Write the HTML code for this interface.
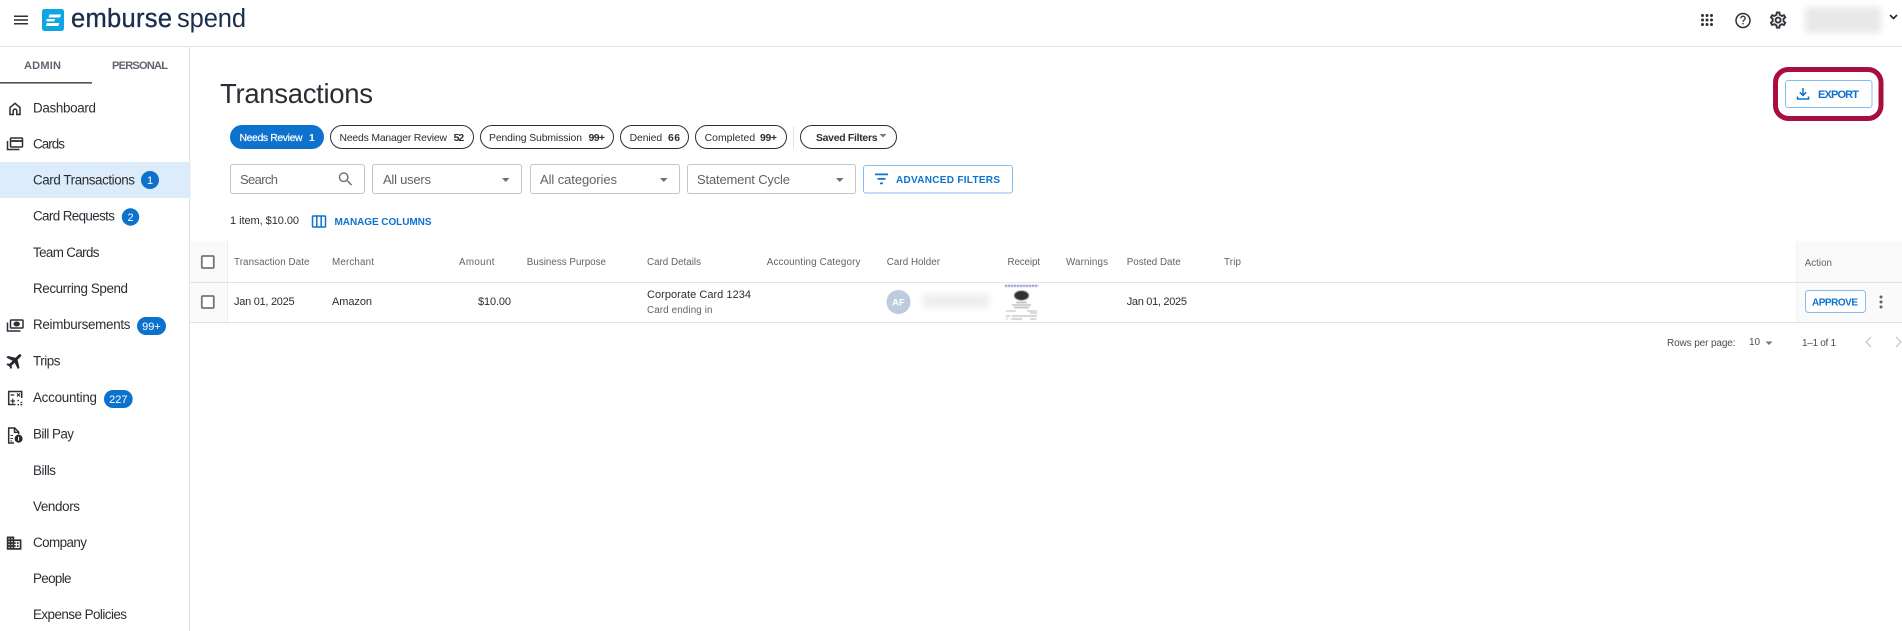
<!DOCTYPE html>
<html lang="en">
<head>
<meta charset="utf-8">
<title>Transactions - emburse spend</title>
<style>
html,body{margin:0;padding:0;background:#fff;width:1902px;height:631px;overflow:hidden}
svg{display:block}
text{font-family:"Liberation Sans",sans-serif;fill:#2a2e34}
.nav{font-size:13.4px}
.tab{font-size:11px;font-weight:700;fill:#5f6570}
.pill{font-size:10.4px}
.b{font-weight:700}
.inp{font-size:13px;fill:#5f6368}
.hd{font-size:9.8px;fill:#5f6368}
.cell{font-size:11px}
.blue{font-size:10px;font-weight:700;fill:#0d72ce}
.badge{font-size:11px;fill:#fff;text-anchor:middle}
.pg{font-size:10px;fill:#4a4e54}
</style>
</head>
<body>
<svg width="1902" height="631" viewBox="0 0 1902 631" xmlns="http://www.w3.org/2000/svg">
<defs>
<filter id="bl" x="-20%" y="-40%" width="140%" height="180%"><feGaussianBlur stdDeviation="3.500"/></filter>
<filter id="bs" x="-10%" y="-10%" width="120%" height="120%"><feGaussianBlur stdDeviation="0.450"/></filter>
</defs>
<rect width="1902" height="631" fill="#fff"/>

<!-- header -->
<rect x="0" y="46" width="1902" height="1" fill="#e3e3e3"/>
<path d="M14 15.500h14v1.500H14zM14 19.300h14v1.500H14zM14 23h14v1.500H14z" fill="#2b2f36"/>
<rect x="42" y="9" width="22" height="22" rx="2.500" fill="#0ea5e4"/>
<path d="M49.500 14.500h11.500l-.9 3H48.500zM46.800 19h8.200l-.8 2.400h-8zM46.800 23h12.400l-.8 3H46z" fill="#fff"/>
<text x="71" y="27" font-size="25.500" textLength="101" style="fill:#1b2e4d;stroke:#1b2e4d;stroke-width:.35">emburse</text>
<text x="177" y="27" font-size="25.500" textLength="69" style="fill:#1b2e4d">spend</text>

<g fill="#2d3138">
<circle cx="1702.500" cy="15.500" r="1.500"/><circle cx="1707" cy="15.500" r="1.500"/><circle cx="1711.500" cy="15.500" r="1.500"/>
<circle cx="1702.500" cy="20" r="1.500"/><circle cx="1707" cy="20" r="1.500"/><circle cx="1711.500" cy="20" r="1.500"/>
<circle cx="1702.500" cy="24.500" r="1.500"/><circle cx="1707" cy="24.500" r="1.500"/><circle cx="1711.500" cy="24.500" r="1.500"/>
</g>
<circle cx="1743" cy="20.500" r="7" fill="none" stroke="#2d3138" stroke-width="1.500"/>
<path d="M1740.800 18.400c0-1.300 1-2.200 2.200-2.200s2.200.9 2.200 2.100c0 1.600-2.200 1.700-2.200 3.600" fill="none" stroke="#2d3138" stroke-width="1.300"/>
<rect x="1742.300" y="23" width="1.400" height="1.400" fill="#2d3138"/>
<g transform="translate(1768 10) scale(.84)" fill="#2d3138" stroke="#2d3138" stroke-width=".2">
<path d="M19.43 12.98c.04-.32.07-.64.07-.98 0-.34-.03-.66-.07-.98l2.11-1.65c.19-.15.24-.42.12-.64l-2-3.46c-.09-.16-.26-.25-.44-.25-.06 0-.12.01-.17.03l-2.49 1c-.52-.4-1.08-.73-1.69-.98l-.38-2.65C14.46 2.18 14.25 2 14 2h-4c-.25 0-.46.18-.49.42l-.38 2.65c-.61.25-1.17.59-1.69.98l-2.49-1c-.06-.02-.12-.03-.18-.03-.17 0-.34.09-.43.25l-2 3.46c-.13.22-.07.49.12.64l2.11 1.65c-.04.32-.07.65-.07.98 0 .33.03.66.07.98l-2.11 1.65c-.19.15-.24.42-.12.64l2 3.46c.09.16.26.25.44.25.06 0 .12-.01.17-.03l2.49-1c.52.4 1.08.73 1.69.98l.38 2.65c.03.24.24.42.49.42h4c.25 0 .46-.18.49-.42l.38-2.65c.61-.25 1.17-.59 1.69-.98l2.49 1c.06.02.12.03.18.03.17 0 .34-.09.43-.25l2-3.46c.12-.22.07-.49-.12-.64l-2.11-1.65zm-1.98-1.71c.04.31.05.52.05.73 0 .21-.02.43-.05.73l-.14 1.13.89.7 1.08.84-.7 1.21-1.27-.51-1.04-.42-.9.68c-.43.32-.84.56-1.25.73l-1.06.43-.16 1.13-.2 1.35h-1.4l-.19-1.35-.16-1.13-1.06-.43c-.43-.18-.83-.41-1.23-.71l-.91-.7-1.06.43-1.27.51-.7-1.21 1.08-.84.89-.7-.14-1.13c-.03-.31-.05-.54-.05-.74s.02-.43.05-.73l.14-1.13-.89-.7-1.08-.84.7-1.21 1.27.51 1.04.42.9-.68c.43-.32.84-.56 1.25-.73l1.06-.43.16-1.13.2-1.35h1.39l.19 1.35.16 1.13 1.06.43c.43.18.83.41 1.23.71l.91.7 1.06-.43 1.27-.51.7 1.21-1.07.85-.89.7.14 1.13zM12 8c-2.21 0-4 1.79-4 4s1.79 4 4 4 4-1.79 4-4-1.79-4-4-4zm0 6c-1.1 0-2-.9-2-2s.9-2 2-2 2 .9 2 2-.9 2-2 2z"/>
</g>
<rect x="1805" y="7" width="76" height="26" rx="4" fill="#e8e8e8" filter="url(#bl)"/>
<path d="M1890 15l3.500 3.500 3.500-3.500" fill="none" stroke="#24282e" stroke-width="1.600"/>

<!-- sidebar -->
<rect x="189" y="47" width="1.200" height="584" fill="#e3e3e3"/>
<text class="tab" x="24" y="69" textLength="37">ADMIN</text>
<text class="tab" x="112" y="69" textLength="56">PERSONAL</text>
<rect x="0" y="82" width="92" height="1.600" fill="#4e535a"/>
<rect x="0" y="162" width="189" height="36" fill="#dcecfa"/>

<g fill="none" stroke="#2b2f36" stroke-width="1.500">
<path d="M10 114.500v-7l5-4.200 5 4.200v7h-3.200v-3.600a1.800 1.800 0 0 0-3.600 0v3.600z"/>
<rect x="10.500" y="138" width="12" height="9" rx="1"/>
<path d="M10.500 141h12" stroke-width="1.800"/>
<path d="M7.500 141v8.500h12"/>
</g>
<g fill="none" stroke="#2b2f36" stroke-width="1.500">
<rect x="10.500" y="320" width="12.500" height="8" rx=".8"/>
<path d="M7.500 322.500v8.500h13"/>
</g>
<ellipse cx="16.700" cy="324" rx="3.200" ry="2.500" fill="#2b2f36"/>
<g transform="translate(4.800 350.800) scale(.85) rotate(45 12 12)" fill="#24282e" stroke="#24282e" stroke-width=".5"><path d="M21 16v-2l-8-5V3.500c0-.83-.67-1.500-1.500-1.500S10 2.670 10 3.500V9l-8 5v2l8-2.500V19l-2 1.500V22l3.500-1 3.500 1v-1.500L13 19v-5.500l8 2.500z"/></g>
<g fill="none" stroke="#2b2f36">
<path d="M15.500 404.500H8.700v-13h13v6.500" stroke-width="1.500"/>
<path d="M10.500 395h3.800M17 393.500l3 3M20 393.500l-3 3M10.500 401h4.500M12.700 398.800v4.400" stroke-width="1.200"/>
<path d="M17.500 400.500h1.500M20.500 402.500h1.800M17.500 404.700h1.500M20.500 404.700h1.800" stroke-width="1.300"/>
</g>
<path d="M14 443H8.700v-15h6l4 4v2.400M14.500 428v4.400h4" fill="none" stroke="#2b2f36" stroke-width="1.500"/>
<path d="M10.500 435.500h2.500M10.500 438.500h2.500M10.500 441h1.800" stroke="#2b2f36" stroke-width="1"/>
<circle cx="18.600" cy="438.700" r="4" fill="#24282e"/>
<path d="M18.600 436.700v4" stroke="#fff" stroke-width="1"/>
<g transform="translate(5.500 534.500) scale(.72)" fill="#2b2f36" stroke="#2b2f36" stroke-width=".35"><path d="M12 7V3H2v18h20V7H12zM6 19H4v-2h2v2zm0-4H4v-2h2v2zm0-4H4V9h2v2zm0-4H4V5h2v2zm4 12H8v-2h2v2zm0-4H8v-2h2v2zm0-4H8V9h2v2zm0-4H8V5h2v2zm10 12h-8v-2h2v-2h-2v-2h2v-2h-2V9h8v10zm-2-8h-2v2h2v-2zm0 4h-2v2h2v-2z"/></g>

<text class="nav" x="33" y="112.500" textLength="63">Dashboard</text>
<text class="nav" x="33" y="148.500" textLength="32">Cards</text>
<text class="nav" x="33" y="184.500" textLength="102">Card Transactions</text>
<text class="nav" x="33" y="220.500" textLength="82">Card Requests</text>
<text class="nav" x="33" y="257" textLength="66.500">Team Cards</text>
<text class="nav" x="33" y="293" textLength="95">Recurring Spend</text>
<text class="nav" x="33" y="329" textLength="97.500">Reimbursements</text>
<text class="nav" x="33" y="365.500" textLength="27.500">Trips</text>
<text class="nav" x="33" y="402" textLength="64">Accounting</text>
<text class="nav" x="33" y="438.500" textLength="41">Bill Pay</text>
<text class="nav" x="33" y="475" textLength="23">Bills</text>
<text class="nav" x="33" y="511" textLength="47">Vendors</text>
<text class="nav" x="33" y="547" textLength="54">Company</text>
<text class="nav" x="33" y="583" textLength="38.500">People</text>
<text class="nav" x="33" y="619" textLength="94">Expense Policies</text>

<circle cx="150" cy="180" r="9" fill="#0d72ce"/><text class="badge" x="150" y="184">1</text>
<circle cx="130.500" cy="217" r="8.700" fill="#0d72ce"/><text class="badge" x="130.500" y="221">2</text>
<rect x="137" y="317" width="29" height="18" rx="9" fill="#0d72ce"/><text class="badge" x="151.500" y="330">99+</text>
<rect x="104" y="390" width="28.700" height="18" rx="9" fill="#0d72ce"/><text class="badge" x="118.300" y="403">227</text>

<!-- title -->
<text x="220" y="103" font-size="27.500" textLength="153">Transactions</text>

<!-- pills -->
<rect x="230" y="125" width="94" height="24" rx="12" fill="#0d72ce"/>
<text class="pill" style="fill:#fff;stroke:#fff;stroke-width:.2" x="239.500" y="141" textLength="63">Needs Review</text>
<text class="pill b" style="fill:#fff" x="309" y="141" textLength="5">1</text>
<g fill="#fff" stroke="#2b2f36" stroke-width="1">
<rect x="330.500" y="125.500" width="143" height="23" rx="11.500"/>
<rect x="480.500" y="125.500" width="133" height="23" rx="11.500"/>
<rect x="620.500" y="125.500" width="68" height="23" rx="11.500"/>
<rect x="695.500" y="125.500" width="91" height="23" rx="11.500"/>
<rect x="800.500" y="125.500" width="96" height="23" rx="11.500"/>
</g>
<rect x="793" y="126" width="1" height="23" fill="#e3e3e3"/>
<text class="pill" x="339.500" y="141" textLength="107.500">Needs Manager Review</text>
<text class="pill b" x="453.600" y="141" textLength="10.500">52</text>
<text class="pill" x="489" y="141" textLength="93">Pending Submission</text>
<text class="pill b" x="588.500" y="141" textLength="16.500">99+</text>
<text class="pill" x="629.600" y="141" textLength="32.500">Denied</text>
<text class="pill b" x="668" y="141" textLength="12">66</text>
<text class="pill" x="704.600" y="141" textLength="50.500">Completed</text>
<text class="pill b" x="760" y="141" textLength="17">99+</text>
<text class="pill b" x="816" y="141" textLength="61.500">Saved Filters</text>
<path d="M879.500 134h7l-3.500 3.500z" fill="#777"/>

<!-- filters -->
<g fill="#fff" stroke="#c4c4c4" stroke-width="1">
<rect x="230.500" y="164.500" width="134" height="29" rx="2.500"/>
<rect x="372.500" y="164.500" width="149" height="29" rx="2.500"/>
<rect x="530.500" y="164.500" width="149" height="29" rx="2.500"/>
<rect x="687.500" y="164.500" width="168" height="29" rx="2.500"/>
</g>
<rect x="863.500" y="165.500" width="149" height="27.500" rx="2.500" fill="#fff" stroke="#85bdf0"/>
<text class="inp" x="240" y="184" textLength="38">Search</text>
<text class="inp" x="383" y="184" textLength="48">All users</text>
<text class="inp" x="540" y="184" textLength="77">All categories</text>
<text class="inp" x="697" y="184" textLength="93">Statement Cycle</text>
<g transform="translate(336.500 170) scale(.76)" fill="#777"><path d="M15.500 14h-.79l-.28-.27C15.410 12.590 16 11.110 16 9.500 16 5.910 13.090 3 9.500 3S3 5.910 3 9.500 5.910 16 9.500 16c1.610 0 3.090-.59 4.230-1.570l.27.28v.79l5 4.990L20.490 19l-4.990-5zm-6 0C7.010 14 5 11.990 5 9.500S7.010 5 9.500 5 14 7.010 14 9.500 11.990 14 9.500 14z"/></g>
<g fill="#6e6e6e">
<path d="M502 178h7.500l-3.750 4z"/><path d="M660 178h7.500l-3.750 4z"/><path d="M836 178h7.500l-3.750 4z"/>
</g>
<path d="M875 173.500h13v1.700h-13zM877.500 178h8v1.700h-8zM880 182.500h3v1.700h-3z" fill="#0d72ce"/>
<text class="blue" x="896" y="183" textLength="104">ADVANCED FILTERS</text>

<text class="cell" x="230" y="224" textLength="69">1 item, $10.00</text>
<g fill="none" stroke="#0d72ce" stroke-width="1.500"><rect x="312.500" y="216" width="13" height="11" rx=".8"/><path d="M316.800 216v11M321.200 216v11"/></g>
<text class="blue" x="334.500" y="225" textLength="97">MANAGE COLUMNS</text>

<!-- export -->
<rect x="1775.500" y="69.500" width="105.500" height="49" rx="13" fill="#fff" stroke="#a80f3e" stroke-width="5"/>
<rect x="1785.500" y="80.500" width="86.500" height="27" rx="2.500" fill="#fff" stroke="#85bdf0"/>
<path d="M1803 88v7M1799.800 92.300l3.200 3.200 3.200-3.200" fill="none" stroke="#0d72ce" stroke-width="1.500"/>
<path d="M1797.500 96.500v2.500h11v-2.500" fill="none" stroke="#0d72ce" stroke-width="1.600"/>
<text class="blue" style="font-size:11px" x="1818" y="98" textLength="41">EXPORT</text>

<!-- table -->
<rect x="190" y="241" width="37.500" height="81" fill="#fafafa"/>
<rect x="1797" y="241" width="105" height="81" fill="#fafafa"/>
<rect x="227" y="241" width="1" height="81" fill="#ececec"/>
<rect x="1796.500" y="241" width="1" height="81" fill="#ececec"/>
<rect x="190" y="282" width="1712" height="1" fill="#e3e3e3"/>
<rect x="190" y="322" width="1712" height="1" fill="#e3e3e3"/>
<rect x="201.800" y="256" width="12" height="12" rx="1" fill="#fff" stroke="#757575" stroke-width="1.800"/>
<rect x="201.800" y="296" width="12" height="12" rx="1" fill="#fff" stroke="#757575" stroke-width="1.800"/>

<text class="hd" x="234" y="265" textLength="75.500">Transaction Date</text>
<text class="hd" x="332" y="265" textLength="42">Merchant</text>
<text class="hd" x="459" y="265" textLength="35.500">Amount</text>
<text class="hd" x="526.800" y="265" textLength="79.200">Business Purpose</text>
<text class="hd" x="647" y="265" textLength="54">Card Details</text>
<text class="hd" x="766.800" y="265" textLength="93.600">Accounting Category</text>
<text class="hd" x="886.800" y="265" textLength="53.200">Card Holder</text>
<text class="hd" x="1007.500" y="265" textLength="32.500">Receipt</text>
<text class="hd" x="1066" y="265" textLength="42">Warnings</text>
<text class="hd" x="1126.700" y="265" textLength="54">Posted Date</text>
<text class="hd" x="1224" y="265" textLength="17">Trip</text>
<text class="hd" x="1804.700" y="266" textLength="27.300">Action</text>

<text class="cell" x="234" y="305" textLength="60.600">Jan 01, 2025</text>
<text class="cell" x="332" y="305" textLength="40">Amazon</text>
<text class="cell" x="478" y="305" textLength="33">$10.00</text>
<text class="cell" x="647" y="298" textLength="104">Corporate Card 1234</text>
<text class="hd" x="647" y="313" textLength="65.500">Card ending in</text>
<circle cx="898.500" cy="302" r="12" fill="#bccbdd"/>
<text x="898.500" y="305.500" font-size="9.500" style="fill:#fff;font-weight:700;text-anchor:middle">AF</text>
<rect x="923" y="294" width="66" height="14" fill="#eeeeee" filter="url(#bl)"/>

<g filter="url(#bs)">
<rect x="1004.500" y="284" width="34" height="36" fill="#fff"/>
<path d="M1005 285.800h33.500" stroke="#3a4fb5" stroke-width="1.800" stroke-dasharray="2 1"/>
<ellipse cx="1021.500" cy="295.500" rx="7.500" ry="5" fill="#333"/>
<rect x="1016" y="302" width="11" height="1" fill="#777"/>
<rect x="1012" y="304.500" width="19" height="1" fill="#888"/>
<rect x="1014" y="307" width="15" height="1" fill="#777"/>
<path d="M1006 311h10M1027 311h10M1030 313h7" stroke="#aaa"/>
<path d="M1006 316h4M1012 316h25" stroke="#999"/>
<path d="M1006 319h1.500M1011 319h11M1030 319h6" stroke="#999"/>
</g>

<text class="cell" x="1126.700" y="305" textLength="60.300">Jan 01, 2025</text>

<rect x="1805.500" y="290.500" width="60" height="22" rx="3" fill="#fff" stroke="#85bdf0"/>
<text class="blue" x="1812" y="305.500" textLength="46">APPROVE</text>
<g fill="#5f6368"><circle cx="1881" cy="297" r="1.500"/><circle cx="1881" cy="302" r="1.500"/><circle cx="1881" cy="307" r="1.500"/></g>

<!-- pagination -->
<text class="pg" x="1667" y="346" textLength="68.500">Rows per page:</text>
<text class="pg" x="1749" y="345" textLength="11">10</text>
<path d="M1765.500 341.500h7l-3.500 3.500z" fill="#777"/>
<text class="pg" x="1802" y="346" textLength="34">1–1 of 1</text>
<path d="M1871 337l-5 5 5 5" fill="none" stroke="#c9c9c9" stroke-width="1.300"/>
<path d="M1896 337l5 5-5 5" fill="none" stroke="#c9c9c9" stroke-width="1.300"/>
</svg>
</body>
</html>
